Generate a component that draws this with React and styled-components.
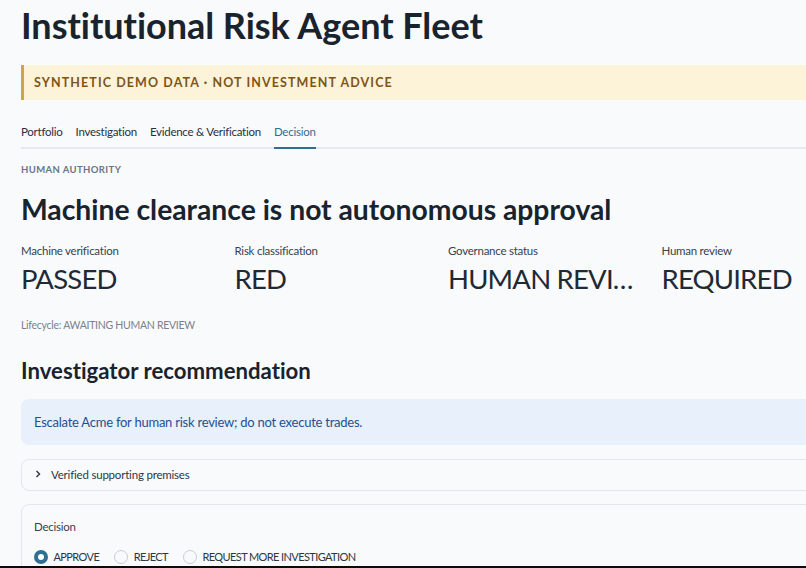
import styled, { createGlobalStyle } from 'styled-components'

const GlobalStyle = createGlobalStyle`
  html, body {
    margin: 0;
    padding: 0;
    background: #0b0b0b;
    height: 568px;
    overflow: hidden;
  }
  body {
    font-family: Lato, "Noto Sans", sans-serif;
    font-variant-ligatures: none;
    color: #1a2530;
  }
`

const Page = styled.div`
  height: 566px;
  width: 806px;
  overflow: hidden;
  background: #f9fafc;
`

const Content = styled.main`
  width: 838px;
  margin-left: 21px;
  display: flex;
  flex-direction: column;
`

const Title = styled.h1`
  margin: 0;
  height: 65px;
  padding-top: 3px;
  box-sizing: border-box;
  font-size: 36px;
  line-height: 44px;
  font-weight: 700;
  letter-spacing: -0.03px;
  color: #18232e;
`

const Notice = styled.div`
  height: 35px;
  box-sizing: border-box;
  display: flex;
  align-items: center;
  padding-left: 10px;
  background: #fdf3d8;
  border-left: 3px solid #d3a349;
  color: #7d5518;
  font-size: 12.5px;
  font-weight: 700;
  letter-spacing: 1.1px;
`

const Tabs = styled.nav`
  display: flex;
  gap: 13px;
  margin-top: 16px;
  height: 33px;
  box-sizing: border-box;
  border-bottom: 2px solid #e6e8ec;
`

const Tab = styled.div`
  height: 33px;
  box-sizing: border-box;
  font-size: 11.5px;
  line-height: 32px;
  letter-spacing: -0.25px;
  color: ${p => (p.$active ? '#2f6f8f' : '#26313c')};
  border-bottom: 2px solid ${p => (p.$active ? '#2f6f8f' : 'transparent')};
`

const Eyebrow = styled.div`
  margin-top: 14px;
  font-size: 9.5px;
  line-height: 14px;
  font-weight: 700;
  letter-spacing: 0.4px;
  color: #6b7484;
`

const Heading = styled.h2`
  margin: 14px 0 0;
  font-size: 28.3px;
  line-height: 36px;
  font-weight: 700;
  color: #18232e;
`

const Metrics = styled.div`
  display: grid;
  grid-template-columns: repeat(4, 1fr);
  gap: 16px;
  margin-top: 16px;
`

const Metric = styled.div`
  min-width: 0;
`

const MetricLabel = styled.div`
  font-size: 11.5px;
  line-height: 16px;
  letter-spacing: -0.25px;
  color: #37424d;
`

const MetricValue = styled.div`
  margin-top: 1px;
  font-size: 27.5px;
  line-height: 38px;
  letter-spacing: -0.8px;
  color: #1f2a35;
  white-space: nowrap;
  overflow: hidden;
  text-overflow: ellipsis;
`

const Lifecycle = styled.div`
  margin-top: 19px;
  font-size: 10.5px;
  line-height: 16px;
  letter-spacing: -0.28px;
  color: #79818c;
`

const SubHeading = styled.h3`
  margin: 22px 0 0;
  font-size: 22.2px;
  line-height: 32px;
  font-weight: 700;
  color: #18232e;
`

const Recommendation = styled.div`
  margin-top: 12px;
  height: 46px;
  box-sizing: border-box;
  display: flex;
  align-items: center;
  padding-left: 13px;
  border-radius: 8px;
  background: #e8f0fb;
  color: #1f4f93;
  font-size: 13px;
  letter-spacing: -0.24px;
`

const Expander = styled.div`
  margin-top: 14px;
  height: 32px;
  box-sizing: border-box;
  display: flex;
  align-items: center;
  gap: 7px;
  padding: 0 0 2px 12px;
  border: 1px solid #e3e6ea;
  border-radius: 8px;
  font-size: 11.5px;
  letter-spacing: -0.2px;
  color: #2c3742;
`

const Panel = styled.section`
  margin-top: 13px;
  height: 80px;
  box-sizing: border-box;
  padding: 14px 12px 0;
  border: 1px solid #e3e6ea;
  border-radius: 8px;
`

const FieldLabel = styled.div`
  font-size: 11.5px;
  line-height: 16px;
  letter-spacing: -0.25px;
  color: #37424d;
`

const RadioRow = styled.div`
  display: flex;
  gap: 14.5px;
  margin: 14px 0 0 -0.5px;
`

const RadioOption = styled.label`
  display: flex;
  align-items: center;
  gap: 6px;
  font-size: 11px;
  line-height: 16px;
  letter-spacing: -0.6px;
  color: #2c3742;
`

const RadioDot = styled.span`
  width: 14px;
  height: 14px;
  border-radius: 50%;
  box-sizing: border-box;
  background: ${p => (p.$checked ? '#fff' : 'transparent')};
  border: ${p => (p.$checked ? '4px solid #2f6f8f' : '1px solid #c9ced5')};
`

const tabs = ['Portfolio', 'Investigation', 'Evidence & Verification', 'Decision']

const metrics = [
  ['Machine verification', 'PASSED'],
  ['Risk classification', 'RED'],
  ['Governance status', 'HUMAN REVIEW PENDING'],
  ['Human review', 'REQUIRED'],
]

const decisions = ['APPROVE', 'REJECT', 'REQUEST MORE INVESTIGATION']

const App = () => (
  <Page>
    <GlobalStyle />
    <Content>
      <Title>Institutional Risk Agent Fleet</Title>
      <Notice>SYNTHETIC DEMO DATA · NOT INVESTMENT ADVICE</Notice>
      <Tabs>
        {tabs.map(t => (
          <Tab key={t} $active={t === 'Decision'}>{t}</Tab>
        ))}
      </Tabs>
      <Eyebrow>HUMAN AUTHORITY</Eyebrow>
      <Heading>Machine clearance is not autonomous approval</Heading>
      <Metrics>
        {metrics.map(([label, value]) => (
          <Metric key={label}>
            <MetricLabel>{label}</MetricLabel>
            <MetricValue>{value}</MetricValue>
          </Metric>
        ))}
      </Metrics>
      <Lifecycle>Lifecycle: AWAITING HUMAN REVIEW</Lifecycle>
      <SubHeading>Investigator recommendation</SubHeading>
      <Recommendation>Escalate Acme for human risk review; do not execute trades.</Recommendation>
      <Expander>
        <svg width="10" height="10" viewBox="0 0 10 10" fill="none" stroke="#2c3742" strokeWidth="1.4">
          <path d="M2.5 2l3 3-3 3" />
        </svg>
        Verified supporting premises
      </Expander>
      <Panel>
        <FieldLabel>Decision</FieldLabel>
        <RadioRow>
          {decisions.map((d, i) => (
            <RadioOption key={d}>
              <RadioDot $checked={i === 0} />
              {d}
            </RadioOption>
          ))}
        </RadioRow>
      </Panel>
    </Content>
  </Page>
)

export default App
